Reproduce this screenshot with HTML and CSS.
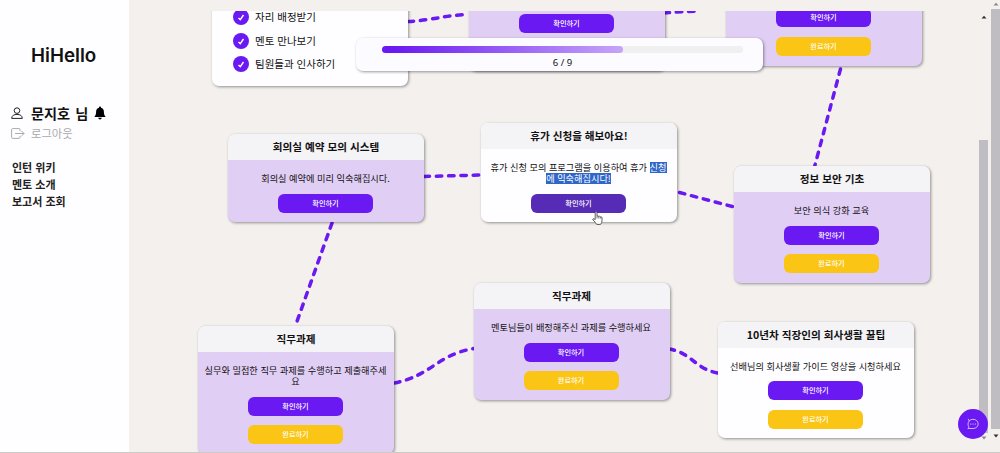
FILE: index.html
```html
<!DOCTYPE html>
<html lang="ko">
<head>
<meta charset="utf-8">
<title>HiHello</title>
<link rel="stylesheet" href="styles.css">
</head>
<body>
<div class="app">
  <aside class="sidebar">
    <h1 class="logo">HiHello</h1>
    <div class="user">
      <svg class="user-icon" viewBox="0 0 12 13" fill="none" stroke="#222" stroke-width="1"><circle cx="6" cy="3.6" r="2.8"/><path d="M.7 11.4C.7 8.6 3 7.400 6 7.400s5.300 1.200 5.300 4z" stroke-linejoin="round"/></svg>
      <span class="user-name">문지호 님</span>
      <svg class="bell-icon" viewBox="0 0 12 14"><path d="M6 .6c.7 0 1 .5 1 1.100 2 .5 2.900 2 2.900 4 0 2.800.7 4 1.800 5.200H.3C1.400 9.700 2.100 8.500 2.100 5.700c0-2 .9-3.500 2.900-4C5 1.100 5.300.6 6 .6zM4.300 11.700h3.400C7.600 12.800 7 13.400 6 13.400s-1.600-.6-1.700-1.700z" fill="#000"/></svg>
    </div>
    <div class="logout">
      <svg class="logout-icon" viewBox="0 0 14 11" fill="none" stroke="#aaa" stroke-width="1" stroke-linecap="round" stroke-linejoin="round"><path d="M9 2.800V1.500Q9 .6 8 .6H1.600Q.6.6.6 1.600v7.800q0 1 1 1H8q1 0 1-.9V8.200M4.500 5.500H13M10.700 3.200 13 5.500l-2.300 2.300"/></svg>
      <span>로그아웃</span>
    </div>
    <nav class="menu">
      <a>인턴 위키</a>
      <a>멘토 소개</a>
      <a>보고서 조회</a>
    </nav>
  </aside>

  <main class="board">
    <svg class="paths" viewBox="129 11 850 441">
      <path d="M408 21.500C432 20.500 445 15 469 14.500"/>
      <path d="M664 13Q682 11.500 700 11"/>
      <path d="M840.500 69 814.500 167"/>
      <path d="M424 176.500 481 175"/>
      <path d="M679.500 192.500 734 207"/>
      <path d="M332 223 295 327"/>
      <path d="M394.500 383C433 375 436 355 474 348.500"/>
      <path d="M669 349C692 353 695 369 718 373"/>
    </svg>

    <section class="card card-white node-checklist">
      <ul class="checks">
        <li><svg class="check" viewBox="0 0 16 16"><circle cx="8" cy="8" r="8"/><path d="M5.500 8.900 7.300 10.700 10.500 6"/></svg>자리 배정받기</li>
        <li><svg class="check" viewBox="0 0 16 16"><circle cx="8" cy="8" r="8"/><path d="M5.500 8.900 7.300 10.700 10.500 6"/></svg>멘토 만나보기</li>
        <li><svg class="check" viewBox="0 0 16 16"><circle cx="8" cy="8" r="8"/><path d="M5.500 8.900 7.300 10.700 10.500 6"/></svg>팀원들과 인사하기</li>
      </ul>
    </section>
    <section class="card node-top-mid">
      <div class="card-body body-cut-mid"><button class="btn">확인하기</button></div>
    </section>
    <section class="card node-top-right">
      <div class="card-body body-cut-right"><button class="btn">확인하기</button><button class="btn btn-done">완료하기</button></div>
    </section>

    <section class="card node-meeting">
      <h2 class="card-title">회의실 예약 모의 시스템</h2>
      <div class="card-body"><p class="desc">회의실 예약에 미리 익숙해집시다.</p><button class="btn">확인하기</button></div>
    </section>
    <section class="card card-white node-vacation">
      <h2 class="card-title">휴가 신청을 해보아요!</h2>
      <div class="card-body"><p class="desc"><span>휴가 신청 모의 프로그램을 이용하여 휴가 <mark>신청</mark></span><mark>에 익숙해집시다!</mark></p><button class="btn btn-hover">확인하기</button></div>
    </section>
    <section class="card node-security">
      <h2 class="card-title">정보 보안 기초</h2>
      <div class="card-body"><p class="desc">보안 의식 강화 교육</p><button class="btn">확인하기</button><button class="btn btn-done">완료하기</button></div>
    </section>
    <section class="card node-task-left">
      <h2 class="card-title">직무과제</h2>
      <div class="card-body"><p class="desc"><span>실무와 밀접한 직무 과제를 수행하고 제출해주세</span><span>요</span></p><button class="btn">확인하기</button><button class="btn btn-done">완료하기</button></div>
    </section>
    <section class="card node-task-mid">
      <h2 class="card-title">직무과제</h2>
      <div class="card-body"><p class="desc">멘토님들이 배정해주신 과제를 수행하세요</p><button class="btn">확인하기</button><button class="btn btn-done">완료하기</button></div>
    </section>
    <section class="card card-white node-tips">
      <h2 class="card-title">10년차 직장인의 회사생활 꿀팁</h2>
      <div class="card-body"><p class="desc">선배님의 회사생활 가이드 영상을 시청하세요</p><button class="btn">확인하기</button><button class="btn btn-done">완료하기</button></div>
    </section>

    <div class="progress">
      <div class="track"><div class="fill"></div></div>
      <span class="count">6 / 9</span>
    </div>

    <svg class="cursor" viewBox="0 0 11 14"><path d="M3.200 8.600V1.600q0-1 .9-1t.9 1v3.600q1-.7 1.700.2 1-.5 1.600.4 1.700-.3 1.700 1.200v2.500q0 2.300-1.500 3.900H4.700Q3.600 11.600.8 8.700q-.2-1.200 1-.9z" fill="#fff" stroke="#333" stroke-width=".8" stroke-linejoin="round"/><path d="M5 5.200v2.300M6.700 5.600v2M8.300 6v1.700" stroke="#333" stroke-width=".6"/></svg>
  </main>

  <div class="scrollbar scroll-inner">
    <svg class="arrow" viewBox="0 0 6 4"><path d="M.5 3.600 3 .8l2.500 2.800z" fill="#333"/></svg>
    <div class="thumb"></div>
    <svg class="arrow" viewBox="0 0 6 4"><path d="M.5.6h5L3 3.500z" fill="#888"/></svg>
  </div>
  <div class="scrollbar scroll-outer">
    <svg class="arrow" viewBox="0 0 6 4"><path d="M.5 3.600 3 .8l2.500 2.800z" fill="#888"/></svg>
    <div class="thumb"></div>
    <svg class="arrow" viewBox="0 0 6 4"><path d="M.5.6h5L3 3.500z" fill="#333"/></svg>
  </div>

  <div class="chat">
    <svg class="chat-icon" viewBox="0 0 12 12" fill="none" stroke="#e6d8ff" stroke-width=".8" stroke-linecap="round" stroke-linejoin="round"><path d="M1.300 1.200 2.200 2.900Q3.600 1.300 6 1.300c3 0 5.200 2 5.200 4.600S9 10.500 6 10.500H.9L2 9.100C.6 7.500.6 4.600 2.200 2.900"/><path d="M3.700 6h.1M6 6h.1M8.300 6h.1" stroke-width="1.200"/></svg>
  </div>
</div>
</body>
</html>
```

FILE: styles.css
```css
* { box-sizing: border-box; }

body {
  margin: 0;
  font-family: "Noto Sans CJK KR", "Noto Sans", sans-serif;
  color: #111;
  background: #f3f0ed;
}

.app {
  position: relative;
  display: flex;
  height: 453px;
  overflow: hidden;
  border-bottom: 1px solid #c9cdc5;
}

/* Sidebar */
.sidebar {
  width: 129px;
  flex: none;
  padding: 44px 0 0 11px;
  background: #fefdff;
}
.logo {
  margin: 0 0 37px 20px;
  font: 600 18.800px/24px Inter, sans-serif;
}
.user {
  display: flex;
  align-items: center;
  height: 16px;
  font-size: 14.200px;
  font-weight: 700;
  line-height: 16px;
}
.user-icon { width: 12px; height: 13px; margin-right: 8px; }
.user-name { width: 63px; white-space: nowrap; word-spacing: 1px; }
.bell-icon { width: 12px; height: 14px; }
.logout {
  display: flex;
  align-items: center;
  height: 16px;
  margin-top: 4px;
  font-size: 11.300px;
  line-height: 16px;
  color: #aaa;
}
.logout-icon { width: 14px; height: 11px; margin-right: 6px; }
.menu {
  display: flex;
  flex-direction: column;
  margin: 18px 0 0 1px;
  font-size: 11px;
  font-weight: 700;
  line-height: 17px;
  color: #222;
}

/* Board: cards placed freely and joined by dashed paths */
.board {
  position: relative;
  width: 850px;
  height: 441px;
  flex: none;
  margin-top: 11px;
  overflow: hidden;
}
.paths {
  position: absolute;
  inset: 0;
  width: 850px;
  height: 441px;
  fill: none;
  stroke: #6a19f2;
  stroke-width: 3.500;
  stroke-linecap: round;
  stroke-dasharray: 5.500 6.800;
}

.card {
  position: absolute;
  width: 196px;
  border-radius: 7px;
  overflow: hidden;
  background: #e1cef5;
  box-shadow: 1px 1px 3px rgba(0, 0, 0, .4);
}
.card-white { background: #fefdff; }
.card-title {
  margin: 0;
  height: 26px;
  font-size: 10.600px;
  font-weight: 700;
  line-height: 25px;
  text-align: center;
  background: #f4f3f6;
}
.card-body {
  display: flex;
  flex-direction: column;
  align-items: center;
  gap: 9.700px;
  padding: 13px 1px 9.500px 0;
}
.desc {
  display: flex;
  flex-direction: column;
  align-items: center;
  margin: 0;
  font-size: 9.200px;
  line-height: 11px;
  white-space: nowrap;
}
.desc span { display: block; height: 11px; }
.desc mark {
  display: inline-block;
  height: 11px;
  color: #fff;
  background: #2f66c8;
}

.btn {
  width: 95px;
  height: 19px;
  flex: none;
  padding: 0;
  border: 0;
  border-radius: 6px;
  font: 500 7.200px/19px "Noto Sans CJK KR", sans-serif;
  color: #fff;
  background: #6a19f2;
}
.btn-hover { background: #562bb5; }
.btn-done { background: #fac515; }

.node-checklist { left: 83px; top: -20px; height: 95px; }
.node-top-mid { left: 340px; top: -20px; height: 80px; }
.node-top-right { left: 597px; top: -20px; height: 75px; }
.node-meeting { left: 99px; top: 123px; }
.node-vacation { left: 352px; top: 112px; }
.node-security { left: 605px; top: 155px; }
.node-task-left { left: 69px; top: 315px; }
.node-task-mid { left: 344.500px; top: 272px; }
.node-tips { left: 589px; top: 310.500px; }

.body-cut-mid { padding-top: 23px; }
.body-cut-right { padding-top: 17.300px; }

.checks {
  display: flex;
  flex-direction: column;
  gap: 7.500px;
  margin: 0;
  padding: 18px 0 0 21px;
  list-style: none;
  font-size: 10.500px;
  line-height: 16px;
}
.checks li { display: flex; align-items: center; gap: 6px; }
.check { width: 16px; height: 16px; fill: #6a19f2; }
.check path { fill: none; stroke: #fff; stroke-width: 1.400; }

.progress {
  position: absolute;
  left: 227px;
  top: 27px;
  width: 407px;
  height: 33px;
  padding: 8px 20px 0 26px;
  border-radius: 7px;
  background: #fcfbff;
  box-shadow: 1px 1px 3px rgba(0, 0, 0, .4);
  text-align: center;
}
.track {
  width: 361px;
  height: 7px;
  border-radius: 3px;
  background: #f1f0f1;
}
.fill {
  width: 241px;
  height: 7px;
  border-radius: 3.500px;
  background: linear-gradient(90deg, #6a19f2 5%, #c6a5f8);
}
.count {
  display: block;
  margin-top: 3px;
  font: 9.500px/14px "Noto Sans", sans-serif;
}

.cursor {
  position: absolute;
  left: 463px;
  top: 200px;
  width: 11px;
  height: 14px;
}

/* Scrollbars */
.scrollbar {
  display: flex;
  flex-direction: column;
  flex: none;
}
.arrow { width: 6px; height: 4px; flex: none; margin-left: 2px; }
.thumb { width: 9px; flex: none; background: #bfbdc1; }
.scroll-inner { width: 11px; padding-top: 15px; }
.scroll-inner .thumb { height: 293px; margin: 121px 0 3px; }
.scroll-outer { width: 10px; padding: 2px 0 0 1px; }
.scroll-outer .thumb { height: 420px; margin: 3px 0 5px; }

.chat {
  position: absolute;
  left: 957.500px;
  top: 409px;
  width: 30px;
  height: 30px;
  display: flex;
  align-items: center;
  justify-content: center;
  border-radius: 50%;
  background: #6a19f2;
}
.chat-icon { width: 12px; height: 12px; }
```
